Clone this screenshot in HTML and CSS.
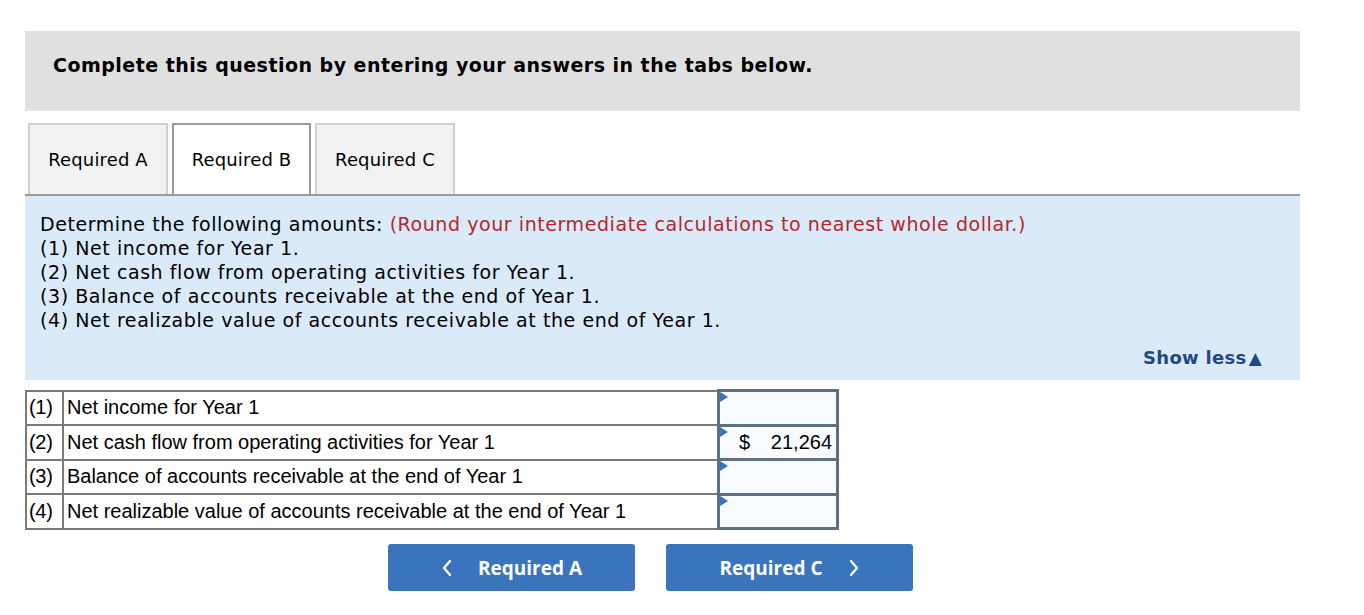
FILE: index.html
```html
<!DOCTYPE html>
<html>
<head>
<meta charset="utf-8">
<link rel="stylesheet" href="styles.css">
</head>
<body>
<div class="page">
  <div class="header">Complete this question by entering your answers in the tabs below.</div>
  <div class="tabs">
    <div class="tab">Required A</div>
    <div class="tab active">Required B</div>
    <div class="tab">Required C</div>
  </div>
  <div class="panel">
    <div class="instructions">
      <div>Determine the following amounts: <span class="red">(Round your intermediate calculations to nearest whole dollar.)</span></div>
      <div>(1) Net income for Year 1.</div>
      <div>(2) Net cash flow from operating activities for Year 1.</div>
      <div>(3) Balance of accounts receivable at the end of Year 1.</div>
      <div>(4) Net realizable value of accounts receivable at the end of Year 1.</div>
    </div>
    <div class="showless">Show less<span class="tri">&#9650;</span></div>
  </div>
  <table class="answers">
    <tr><td class="num">(1)</td><td class="label">Net income for Year 1</td><td class="inp"><div class="box"><span class="flag"></span></div></td></tr>
    <tr><td class="num">(2)</td><td class="label">Net cash flow from operating activities for Year 1</td><td class="inp"><div class="box"><span class="flag"></span><span class="dollar">$</span><span class="val">21,264</span></div></td></tr>
    <tr><td class="num">(3)</td><td class="label">Balance of accounts receivable at the end of Year 1</td><td class="inp"><div class="box"><span class="flag"></span></div></td></tr>
    <tr><td class="num">(4)</td><td class="label">Net realizable value of accounts receivable at the end of Year 1</td><td class="inp"><div class="box"><span class="flag"></span></div></td></tr>
  </table>
  <div class="nav">
    <button class="btn"><svg class="chev" width="12" height="18" viewBox="0 0 12 18"><path d="M9 2 L3 9 L9 16" fill="none" stroke="#fff" stroke-width="2.2" stroke-linecap="round" stroke-linejoin="round"/></svg><span class="btn-text left">Required A</span></button>
    <button class="btn"><span class="btn-text right">Required C</span><svg class="chev" width="12" height="18" viewBox="0 0 12 18"><path d="M3 2 L9 9 L3 16" fill="none" stroke="#fff" stroke-width="2.2" stroke-linecap="round" stroke-linejoin="round"/></svg></button>
  </div>
</div>
</body>
</html>
```
FILE: styles.css
```css
* { box-sizing: border-box; }
body {
  margin: 0;
  background: #ffffff;
  font-family: "DejaVu Sans", Verdana, sans-serif;
  color: #000;
}
.page {
  padding: 31px 0 0 25px;
  width: 1300px;
}
.header {
  height: 80px;
  background: #e0e0e0;
  padding: 23px 0 0 28px;
  line-height: 22px;
  font-weight: bold;
  font-size: 19px;
  letter-spacing: 0.48px;
}
.tabs {
  margin-top: 12px;
  display: flex;
  gap: 4px;
  padding-left: 3px;
  border-bottom: 2px solid #9a9a9a;
}
.tab {
  width: 140px;
  height: 71px;
  background: #f2f2f2;
  border: 2px solid #cfcfcf;
  border-bottom: none;
  display: flex;
  align-items: center;
  justify-content: center;
  font-size: 18px;
  letter-spacing: 0.15px;
}
.tab.active {
  width: 139px;
  background: #ffffff;
  border-color: #9a9a9a;
}
.panel {
  background: #dbeaf9;
  height: 184px;
  padding: 16px 15px 0 15px;
  position: relative;
  font-size: 19px;
  line-height: 24px;
  letter-spacing: 0.57px;
}
.red { color: #b3272d; }
.showless {
  position: absolute;
  right: 38px;
  top: 150px;
  font-weight: bold;
  font-size: 18px;
  line-height: 24px;
  color: #1d4a82;
  letter-spacing: 0.3px;
}
.tri { font-size: 17px; margin-left: 2px; }
.answers {
  margin-top: 9px;
  border-collapse: collapse;
  width: 814px;
  font-family: "Liberation Sans", Arial, sans-serif;
  font-size: 20px;
  border: 2px solid #7a7a7a;
}
.answers td {
  border: 2px solid #7a7a7a;
  height: 34.5px;
  padding: 0;
}
.answers td.num {
  width: 37px;
  padding-left: 2px;
  letter-spacing: -0.3px;
}
.answers td.label {
  width: 658px;
  padding-left: 3px;
}
.answers td.inp {
  width: 119px;
  border: 3px solid #5e6e84;
  padding: 0;
}
.box {
  position: relative;
  height: 100%;
  background: #f8fbff;
  display: flex;
  align-items: center;
  padding: 0 4px 0 19px;
}
.flag {
  position: absolute;
  left: 0;
  top: 0;
  width: 0;
  height: 0;
  border-top: 5px solid transparent;
  border-bottom: 5px solid transparent;
  border-left: 8px solid #3c73b8;
}
.val { margin-left: auto; }
.nav {
  margin-top: 14px;
  padding-left: 363px;
  display: flex;
  gap: 31px;
}
.btn {
  width: 247px;
  height: 47px;
  background: #3a74bd;
  border: none;
  border-radius: 3px;
  color: #fff;
  display: flex;
  align-items: center;
  justify-content: center;
  font-family: "Open Sans", "Liberation Sans", sans-serif;
  font-weight: bold;
  font-size: 19px;
  padding: 0;
}
.btn-text.left { margin-left: 25px; }
.btn-text.right { margin-right: 25px; }
```
